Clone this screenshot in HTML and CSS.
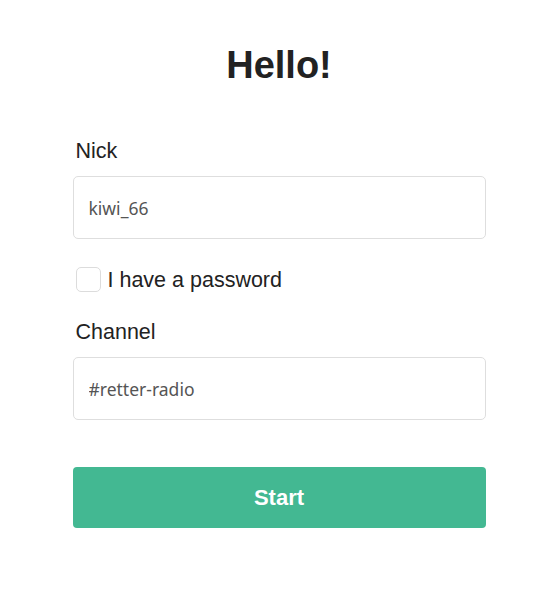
FILE: index.html
```html
<!DOCTYPE html>
<html lang="en">
<head>
<meta charset="utf-8">
<title>Hello!</title>
<link rel="stylesheet" href="styles.css">
</head>
<body>
<main class="login">
  <h1 class="title">Hello!</h1>
  <form class="form">
    <label class="label" for="nick">Nick</label>
    <input class="field" id="nick" type="text" value="kiwi_66">
    <label class="check-row">
      <input class="check" type="checkbox">
      <span class="check-text">I have a password</span>
    </label>
    <label class="label label-channel" for="channel">Channel</label>
    <input class="field" id="channel" type="text" value="#retter-radio">
    <button class="start" type="button">Start</button>
  </form>
</main>
</body>
</html>
```

FILE: styles.css
```css
* { box-sizing: border-box; }

html, body {
  margin: 0;
  padding: 0;
  background: #fff;
}

body {
  font-family: "Liberation Sans", Arial, sans-serif;
  color: #222;
}

.login {
  width: 413px;
  margin: 0 auto;
  padding-top: 43px;
  display: flex;
  flex-direction: column;
}

.title {
  margin: 0;
  font-size: 38px;
  line-height: 44px;
  font-weight: 700;
  text-align: center;
  color: #222;
}

.form {
  display: flex;
  flex-direction: column;
  margin-top: 52px;
}

.label {
  font-size: 21.5px;
  line-height: 24px;
  padding-left: 3px;
  color: #222;
}

.field {
  margin-top: 13px;
  height: 63px;
  width: 100%;
  border: 1px solid #dedede;
  border-radius: 5px;
  padding: 0 15px;
  font-family: "Noto Sans", "Open Sans", sans-serif;
  font-size: 17.5px;
  color: #555;
  background: #fff;
  outline: none;
}

.check-row {
  margin-top: 28px;
  display: flex;
  align-items: center;
  gap: 7px;
  padding-left: 3px;
  height: 25px;
}

.check {
  appearance: none;
  -webkit-appearance: none;
  margin: 0;
  width: 25px;
  height: 25px;
  border: 1px solid #dcdcdc;
  border-radius: 5px;
  background: #fff;
}

.check-text {
  font-size: 21.5px;
  line-height: 24px;
  color: #222;
}

.label-channel {
  margin-top: 28px;
}

.start {
  margin-top: 47px;
  height: 61px;
  width: 100%;
  border: none;
  border-radius: 4px;
  background: #43b892;
  color: #fff;
  font-family: "Liberation Sans", Arial, sans-serif;
  font-size: 22px;
  font-weight: 700;
}
```
